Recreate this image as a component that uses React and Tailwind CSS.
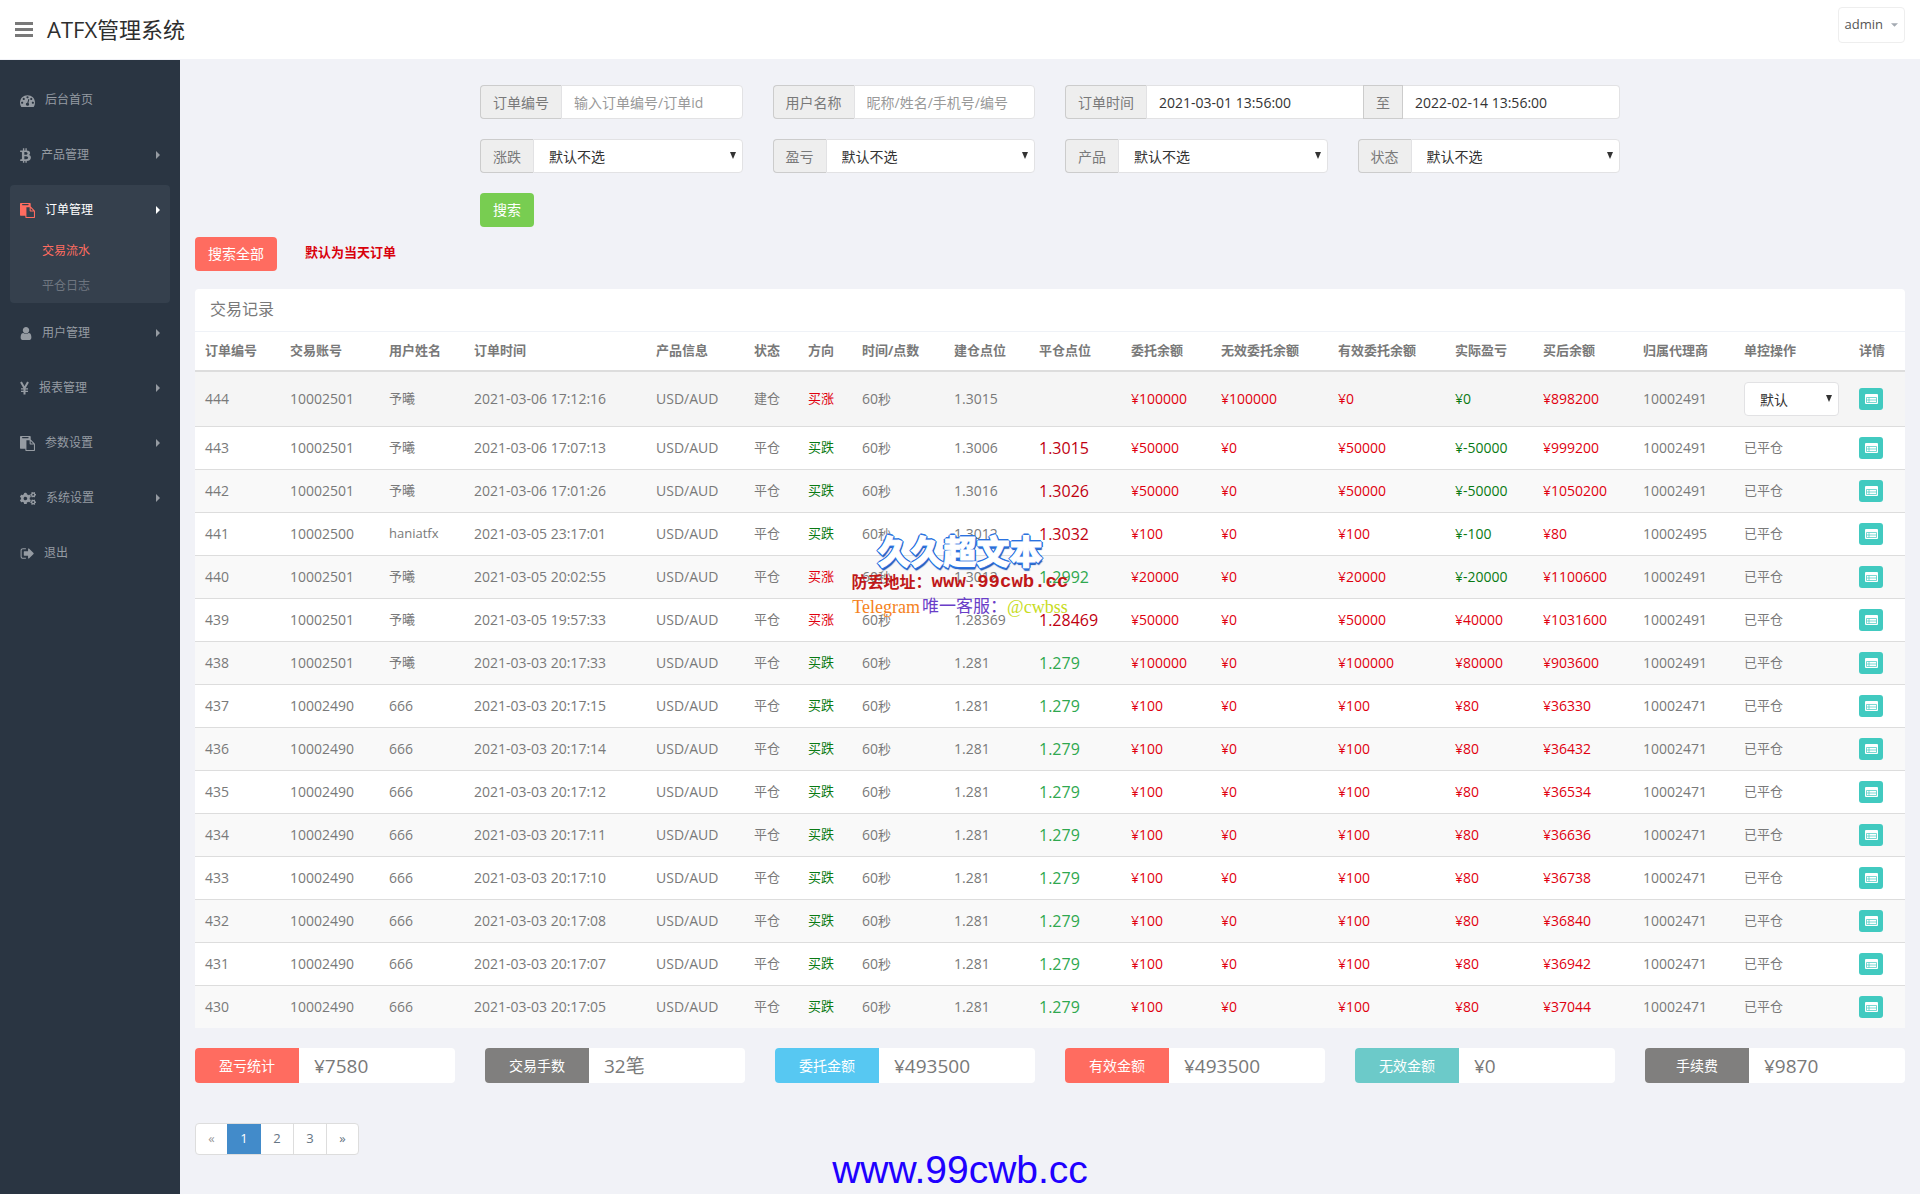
import React from "react";
import { FaBtc, FaCogs } from "react-icons/fa";

function DashboardIcon({ className }) {
  return (
    <svg className={className} viewBox="0 0 1792 1792" fill="currentColor" aria-hidden="true">
      <path d="M384 1152q0-53-37.500-90.500t-90.500-37.500-90.500 37.500-37.500 90.500 37.500 90.500 90.500 37.500 90.500-37.500 37.500-90.500zm192-448q0-53-37.500-90.500t-90.500-37.500-90.500 37.500-37.500 90.500 37.500 90.500 90.500 37.500 90.500-37.500 37.500-90.500zm428 481l101-382q6-26-7.500-48.500t-38.500-29.500-48 6.500-30 39.500l-101 382q-60 5-107 43.500t-63 98.500q-20 77 20 146t117 89 146-20 89-117q16-60-6-117t-72-91zm660-33q0-53-37.500-90.500t-90.500-37.500-90.500 37.500-37.500 90.500 37.500 90.500 90.500 37.500 90.500-37.500 37.500-90.500zm-640-640q0-53-37.500-90.500t-90.500-37.500-90.500 37.500-37.500 90.500 37.500 90.500 90.500 37.500 90.500-37.500 37.500-90.500zm448 192q0-53-37.500-90.500t-90.500-37.500-90.500 37.500-37.500 90.500 37.500 90.500 90.500 37.500 90.500-37.500 37.500-90.500zm320 448q0 261-141 483-19 29-54 29h-1402q-35 0-54-29-141-221-141-483 0-182 71-348t191-286 286-191 348-71 348 71 286 191 191 286 71 348z" />
    </svg>
  );
}

function PasteIcon({ className }) {
  return (
    <svg className={className} viewBox="0 0 1792 1792" fill="currentColor" aria-hidden="true">
      <path d="M768 1664h896v-640h-416q-40 0-68-28t-28-68v-416h-384v1152zm256-1440v-64q0-13-9.500-22.500t-22.500-9.500h-704q-13 0-22.500 9.500t-9.500 22.500v64q0 13 9.500 22.500t22.500 9.500h704q13 0 22.500-9.500t9.500-22.500zm256 672h299l-299-299v299zm512 128v672q0 40-28 68t-68 28h-960q-40 0-68-28t-28-68v-160h-544q-40 0-68-28t-28-68v-1344q0-40 28-68t68-28h1088q40 0 68 28t28 68v328q21 13 36 28l408 408q28 28 48 76t20 88z" />
    </svg>
  );
}

function UserIcon({ className }) {
  return (
    <svg className={className} viewBox="256 0 1280 1792" fill="currentColor" aria-hidden="true">
      <path d="M1536 1399q0 109-62.500 187t-150.500 78h-854q-88 0-150.500-78t-62.500-187q0-85 8.500-160.500t31.500-152 58.500-131 94-89 134.500-34.500q131 128 313 128t313-128q76 0 134.500 34.500t94 89 58.500 131 31.500 152 8.500 160.500zm-256-887q0 159-112.500 271.500t-271.500 112.500-271.500-112.500-112.500-271.500 112.500-271.500 271.500-112.500 271.500 112.500 112.500 271.500z" />
    </svg>
  );
}

function YenIcon({ className }) {
  return (
    <svg className={className} viewBox="0 0 9 15" fill="none" stroke="currentColor" aria-hidden="true">
      <path d="M1 1l3.500 6.300L8 1M4.500 7v6.500" strokeWidth="2" />
      <path d="M1 7.800h7M1 10.300h7" strokeWidth="1.200" />
    </svg>
  );
}

function SignOutIcon({ className }) {
  return (
    <svg className={className} viewBox="0 0 1664 1792" fill="currentColor" aria-hidden="true">
      <path d="M704 1440q0 4 1 20t.5 26.500-3 23.500-10 19.500-20.500 6.500h-320q-119 0-203.500-84.500t-84.500-203.500v-704q0-119 84.500-203.500t203.500-84.500h320q13 0 22.500 9.500t9.500 22.500q0 4 1 20t.5 26.500-3 23.500-10 19.500-20.500 6.500h-320q-66 0-113 47t-47 113v704q0 66 47 113t113 47h312l11.500 1 11.500 3 8 5.500 7 9 2 13.500zm928-544q0 26-19 45l-544 544q-19 19-45 19t-45-19-19-45v-288h-448q-26 0-45-19t-19-45v-384q0-26 19-45t45-19h448v-288q0-26 19-45t45-19 45 19l544 544q19 19 19 45z" />
    </svg>
  );
}

function ListIcon() {
  return (
    <svg className="h-[10px] w-[13px]" viewBox="0 0 13 10" aria-hidden="true">
      <rect width="13" height="10" rx="1" fill="#fff" />
      <path d="M1.500 3.500h10v5h-10zM1.500 6h10M4 3.500v5" fill="none" stroke="#41cac0" strokeWidth="0.700" />
    </svg>
  );
}

function Caret({ className }) {
  return (
    <svg className={className} viewBox="0 0 4 8" fill="currentColor" aria-hidden="true">
      <path d="M0 0l4 4-4 4z" />
    </svg>
  );
}

const menu = [
  { label: "后台首页", Icon: DashboardIcon, size: "w-[15px]" },
  { label: "产品管理", Icon: FaBtc, size: "w-[11px]", more: true },
  { label: "订单管理", Icon: PasteIcon, size: "w-[15px]", more: true, active: true, children: ["交易流水", "平仓日志"] },
  { label: "用户管理", Icon: UserIcon, size: "w-[12px]", more: true },
  { label: "报表管理", Icon: YenIcon, size: "w-[9px]", more: true },
  { label: "参数设置", Icon: PasteIcon, size: "w-[15px]", more: true },
  { label: "系统设置", Icon: FaCogs, size: "w-[16px]", more: true },
  { label: "退出", Icon: SignOutIcon, size: "w-[14px]" },
];

function Sidebar() {
  return (
    <nav className="w-[180px] shrink-0 bg-[#2a3542] px-[10px] pt-[15px]" aria-label="主菜单">
      <ul className="flex flex-col gap-[5px]">
        {menu.map(({ label, Icon, size, more, active, children }) => (
          <li key={label} className={active ? "rounded bg-[#35404d]" : "rounded"}>
            <a
              href="#"
              className={
                active
                  ? "flex h-[50px] items-center px-[10px] text-[12px] text-white"
                  : "flex h-[50px] items-center px-[10px] text-[12px] text-[#959ba2]"
              }
            >
              <span className={active ? "mr-[10px] flex text-[#ff6c60]" : "mr-[10px] flex"}>
                <Icon className={`h-[15px] ${size}`} />
              </span>
              {label}
              {more && <Caret className="ml-auto h-[8px] w-[4px]" />}
            </a>
            {children && (
              <ul>
                {children.map((c, i) => (
                  <li key={c}>
                    <a
                      href="#"
                      className={
                        i === 0
                          ? "flex h-[34px] items-center pb-[2px] pl-[32px] text-[12px] text-[#ff6c60]"
                          : "flex h-[34px] items-center pl-[32px] text-[12px] text-[#6f7680]"
                      }
                    >
                      {c}
                    </a>
                  </li>
                ))}
              </ul>
            )}
          </li>
        ))}
      </ul>
    </nav>
  );
}

const addon = "flex shrink-0 items-center border border-[#ccc] bg-[#eee] px-3 text-[14px] text-[#797979]";

function DownArrow() {
  return (
    <svg className="pointer-events-none absolute top-[13px] right-[7px] h-[7px] w-[6px]" viewBox="0 0 6 7" fill="#333" aria-hidden="true">
      <path d="M0 0h6L3 7z" />
    </svg>
  );
}

function TextField({ id, label, placeholder }) {
  return (
    <div className="flex h-[34px]">
      <label htmlFor={id} className={`${addon} rounded-l border-r-0`}>{label}</label>
      <input
        id={id}
        type="text"
        placeholder={placeholder}
        className="min-w-0 flex-1 rounded-r border border-[#e2e2e4] bg-white px-3 text-[14px] text-[#333] placeholder:text-[#999]"
      />
    </div>
  );
}

function SelectField({ id, label }) {
  return (
    <div className="flex h-[34px]">
      <label htmlFor={id} className={`${addon} rounded-l border-r-0`}>{label}</label>
      <div className="relative flex min-w-0 flex-1">
        <select
          id={id}
          className="w-full appearance-none rounded-r border border-[#e2e2e4] bg-white px-[15px] text-[14px] text-[#333]"
        >
          <option>默认不选</option>
        </select>
        <DownArrow />
      </div>
    </div>
  );
}

function SearchForm() {
  const date = "min-w-0 flex-1 border border-[#e2e2e4] bg-white px-3 text-[14px] text-[#333]";
  return (
    <form className="mx-auto grid w-full max-w-[1140px] grid-cols-4 gap-x-[30px] gap-y-5" onSubmit={(e) => e.preventDefault()}>
      <TextField id="order" label="订单编号" placeholder="输入订单编号/订单id" />
      <TextField id="user" label="用户名称" placeholder="昵称/姓名/手机号/编号" />
      <div className="col-span-2 flex h-[34px]">
        <label htmlFor="from" className={`${addon} rounded-l border-r-0`}>订单时间</label>
        <input id="from" type="text" defaultValue="2021-03-01 13:56:00" className={`${date} border-r-0`} />
        <label htmlFor="to" className={addon}>至</label>
        <input id="to" type="text" defaultValue="2022-02-14 13:56:00" className={`${date} rounded-r border-l-0`} />
      </div>
      <SelectField id="trend" label="涨跌" />
      <SelectField id="profit" label="盈亏" />
      <SelectField id="product" label="产品" />
      <SelectField id="status" label="状态" />
      <div>
        <button type="submit" className="h-[34px] rounded bg-[#78cd51] px-[13px] pb-[2px] text-[14px] text-white">搜索</button>
      </div>
    </form>
  );
}

const columns = [
  ["订单编号", 85], ["交易账号", 99], ["用户姓名", 85], ["订单时间", 182], ["产品信息", 98], ["状态", 54],
  ["方向", 54], ["时间/点数", 92], ["建仓点位", 85], ["平仓点位", 92], ["委托余额", 90], ["无效委托余额", 117],
  ["有效委托余额", 117], ["实际盈亏", 88], ["买后余额", 100], ["归属代理商", 101], ["单控操作", 115], ["详情", 56],
];
const total = columns.reduce((s, c) => s + c[1], 0);

// id, account, name, time, up, open, close, close colour, amount, invalid, valid, profit, balance, agent
const rows = [
  [444, "10002501", "予曦", "2021-03-06 17:12:16", true, "1.3015", "", "", 100000, 100000, 0, 0, 898200, "10002491"],
  [443, "10002501", "予曦", "2021-03-06 17:07:13", false, "1.3006", "1.3015", "r", 50000, 0, 50000, -50000, 999200, "10002491"],
  [442, "10002501", "予曦", "2021-03-06 17:01:26", false, "1.3016", "1.3026", "r", 50000, 0, 50000, -50000, 1050200, "10002491"],
  [441, "10002500", "haniatfx", "2021-03-05 23:17:01", false, "1.3012", "1.3032", "r", 100, 0, 100, -100, 80, "10002495"],
  [440, "10002501", "予曦", "2021-03-05 20:02:55", true, "1.3012", "1.2992", "g", 20000, 0, 20000, -20000, 1100600, "10002491"],
  [439, "10002501", "予曦", "2021-03-05 19:57:33", true, "1.28369", "1.28469", "r", 50000, 0, 50000, 40000, 1031600, "10002491"],
  [438, "10002501", "予曦", "2021-03-03 20:17:33", false, "1.281", "1.279", "g", 100000, 0, 100000, 80000, 903600, "10002491"],
  [437, "10002490", "666", "2021-03-03 20:17:15", false, "1.281", "1.279", "g", 100, 0, 100, 80, 36330, "10002471"],
  [436, "10002490", "666", "2021-03-03 20:17:14", false, "1.281", "1.279", "g", 100, 0, 100, 80, 36432, "10002471"],
  [435, "10002490", "666", "2021-03-03 20:17:12", false, "1.281", "1.279", "g", 100, 0, 100, 80, 36534, "10002471"],
  [434, "10002490", "666", "2021-03-03 20:17:11", false, "1.281", "1.279", "g", 100, 0, 100, 80, 36636, "10002471"],
  [433, "10002490", "666", "2021-03-03 20:17:10", false, "1.281", "1.279", "g", 100, 0, 100, 80, 36738, "10002471"],
  [432, "10002490", "666", "2021-03-03 20:17:08", false, "1.281", "1.279", "g", 100, 0, 100, 80, 36840, "10002471"],
  [431, "10002490", "666", "2021-03-03 20:17:07", false, "1.281", "1.279", "g", 100, 0, 100, 80, 36942, "10002471"],
  [430, "10002490", "666", "2021-03-03 20:17:05", false, "1.281", "1.279", "g", 100, 0, 100, 80, 37044, "10002471"],
];

function Row({ row, index }) {
  const [id, account, name, time, up, open, close, tone, amount, invalid, valid, profit, balance, agent] = row;
  const first = index === 0;
  const td = first ? "pl-[10px]" : "border-t border-[#ddd] pl-[10px]";
  const num = `${td} pb-[2px] text-[14px]`;
  const red = `${num} text-[#e0000f]`;
  return (
    <tr className={first ? "h-[54px] bg-[#f5f5f5]" : index % 2 === 0 ? "h-[43px] bg-[#f9f9f9]" : "h-[43px] bg-white"}>
      <td className={num}>{id}</td>
      <td className={num}>{account}</td>
      <td className={name === "666" ? num : td}>{name}</td>
      <td className={num}>{time}</td>
      <td className={num}>USD/AUD</td>
      <td className={td}>{first ? "建仓" : "平仓"}</td>
      <td className={up ? `${td} text-[#e0000f]` : `${td} text-[#0a7a14]`}>{up ? "买涨" : "买跌"}</td>
      <td className={td}><span className="text-[14px]">60</span>秒</td>
      <td className={num}>{open}</td>
      <td className={tone === "r" ? `${td} text-[16px] text-[#c00010]` : `${td} text-[16px] text-[#2fa84f]`}>{close}</td>
      <td className={red}>¥{amount}</td>
      <td className={red}>¥{invalid}</td>
      <td className={red}>¥{valid}</td>
      <td className={profit > 0 ? red : `${num} text-[#0a7a14]`}>¥{profit}</td>
      <td className={red}>¥{balance}</td>
      <td className={num}>{agent}</td>
      <td className={td}>
        {first ? (
          <div className="relative flex w-[95px]">
            <select aria-label="单控操作" className="h-[34px] w-full appearance-none rounded border border-[#e2e2e4] bg-white px-[15px] text-[14px] text-[#333]">
              <option>默认</option>
            </select>
            <DownArrow />
          </div>
        ) : (
          "已平仓"
        )}
      </td>
      <td className={td}>
        <button type="button" aria-label="详情" className="flex h-[22px] w-6 items-center justify-center rounded-[3px] bg-[#41cac0]">
          <ListIcon />
        </button>
      </td>
    </tr>
  );
}

function Records() {
  return (
    <section className="rounded-t bg-white">
      <h2 className="flex h-[43px] items-center border-b border-[#eff2f7] px-[15px] pb-[2px] text-[16px]">交易记录</h2>
      <table className="w-full table-fixed border-separate border-spacing-0 text-left text-[13px] whitespace-nowrap">
        <colgroup>
          {columns.map(([label, w]) => (
            <col key={label} style={{ width: `${(w / total) * 100}%` }} />
          ))}
        </colgroup>
        <thead>
          <tr className="h-[40px]">
            {columns.map(([label]) => (
              <th key={label} scope="col" className="border-b-2 border-[#ddd] pl-[10px] font-bold">{label}</th>
            ))}
          </tr>
        </thead>
        <tbody>
          {rows.map((r, i) => (
            <Row key={r[0]} row={r} index={i} />
          ))}
        </tbody>
      </table>
    </section>
  );
}

const stats = [
  ["盈亏统计", "¥7580", "bg-[#ff6c60]"],
  ["交易手数", "32笔", "bg-[#807f7e]"],
  ["委托金额", "¥493500", "bg-[#57c8f2]"],
  ["有效金额", "¥493500", "bg-[#ff6c60]"],
  ["无效金额", "¥0", "bg-[#6ccac9]"],
  ["手续费", "¥9870", "bg-[#807f7e]"],
];

function Stats() {
  return (
    <dl className="mt-5 grid grid-cols-6 gap-[30px]">
      {stats.map(([label, value, color]) => (
        <div key={label} className="flex h-[35px] items-center overflow-hidden rounded bg-white">
          <dt className={`flex h-full w-2/5 items-center justify-center text-[14px] text-white ${color}`}>{label}</dt>
          <dd className="px-[15px] pt-[2px] text-[19px] leading-none">{value}</dd>
        </div>
      ))}
    </dl>
  );
}

function Pagination() {
  const cell = "flex h-full w-[33px] items-center justify-center border-r border-[#ddd] text-[13px] text-[#667584]";
  return (
    <nav className="mt-10 flex" aria-label="分页">
      <div className="flex h-[32px] overflow-hidden rounded border border-[#ddd] bg-white">
        <button type="button" disabled className="flex h-full w-[31px] items-center justify-center text-[13px] text-[#999]">«</button>
        <a href="#" aria-current="page" className="flex h-full w-[34px] items-center justify-center bg-[#428bca] text-[13px] text-white">1</a>
        <a href="#" className={cell}>2</a>
        <a href="#" className={cell}>3</a>
        <a href="#" className="flex h-full w-[31px] items-center justify-center text-[13px] text-[#667584]">»</a>
      </div>
    </nav>
  );
}

function Watermarks() {
  return (
    <>
      <div className="pointer-events-none absolute inset-x-0 top-[530px] flex flex-col items-center whitespace-nowrap">
        <p className="h-[42px] font-['Noto_Sans_CJK_SC',sans-serif] text-[33px] leading-[40px] font-black text-white [-webkit-text-stroke:1px_#fff] [text-shadow:2px_0_#2b72e0,-2px_0_#2b72e0,0_2px_#2b72e0,0_-2px_#2b72e0,1px_1px_#2b72e0,-1px_-1px_#2b72e0,1px_-1px_#2b72e0,-1px_1px_#2b72e0,1px_3px_1px_#1c56b8]">
          久久超文本
        </p>
        <p className="flex h-[20px] items-center text-[#c01818]">
          <span className="text-[16px] font-bold">防丢地址：</span>
          <span className="font-['Liberation_Mono',monospace] text-[19px] font-bold">www.99cwb.cc</span>
        </p>
        <p className="flex h-[30px] items-center font-['Liberation_Serif','Noto_Sans_CJK_SC',serif] text-[18px]">
          <span className="text-[#f58220]">Telegram</span>
          <span className="pl-[2px] text-[17px] text-[#6a3ec8]">唯一客服：</span>
          <span className="text-[#c8dc1e]">@cwbss</span>
        </p>
      </div>
      <p className="pointer-events-none absolute inset-x-0 bottom-0 text-center font-['Liberation_Sans',sans-serif] text-[39px] leading-[48px] text-[#2000ff]">
        www.99cwb.cc
      </p>
    </>
  );
}

export default function App() {
  return (
    <div className="relative flex min-h-screen flex-col bg-[#f1f2f7] font-['Open_Sans','Noto_Sans_CJK_SC',sans-serif] text-[13px] text-[#797979]">
      <header className="flex h-[60px] items-center border-b border-[#f1f2f7] bg-white px-[15px]">
        <button type="button" aria-label="切换菜单" className="flex w-[18px] flex-col gap-[3px]">
          <span className="h-[3px] bg-[#797979]" />
          <span className="h-[3px] bg-[#797979]" />
          <span className="h-[3px] bg-[#797979]" />
        </button>
        <a href="#" className="pl-[14px] text-[22px] text-[#2e2e2e]">ATFX管理系统</a>
        <button type="button" className="mt-[7px] mb-auto ml-auto flex h-[36px] items-center gap-[8px] rounded border border-[#eee] px-[6px] text-[13px] text-[#555]">
          admin
          <svg className="h-[4px] w-[7px]" viewBox="0 0 8 4" fill="#a4aab2" aria-hidden="true">
            <path d="M0 0h8L4 4z" />
          </svg>
        </button>
      </header>
      <div className="flex flex-1">
        <Sidebar />
        <main className="min-w-0 flex-1 px-[15px] pt-[25px]">
          <SearchForm />
          <div className="mt-[10px] mb-[18px] flex items-center gap-[28px]">
            <button type="button" className="h-[34px] rounded bg-[#ff6c60] px-[13px] pb-[2px] text-[14px] text-white">搜索全部</button>
            <strong className="pb-[2px] text-[13px] text-[#d9000b]">默认为当天订单</strong>
          </div>
          <Records />
          <Stats />
          <Pagination />
        </main>
      </div>
      <Watermarks />
    </div>
  );
}
